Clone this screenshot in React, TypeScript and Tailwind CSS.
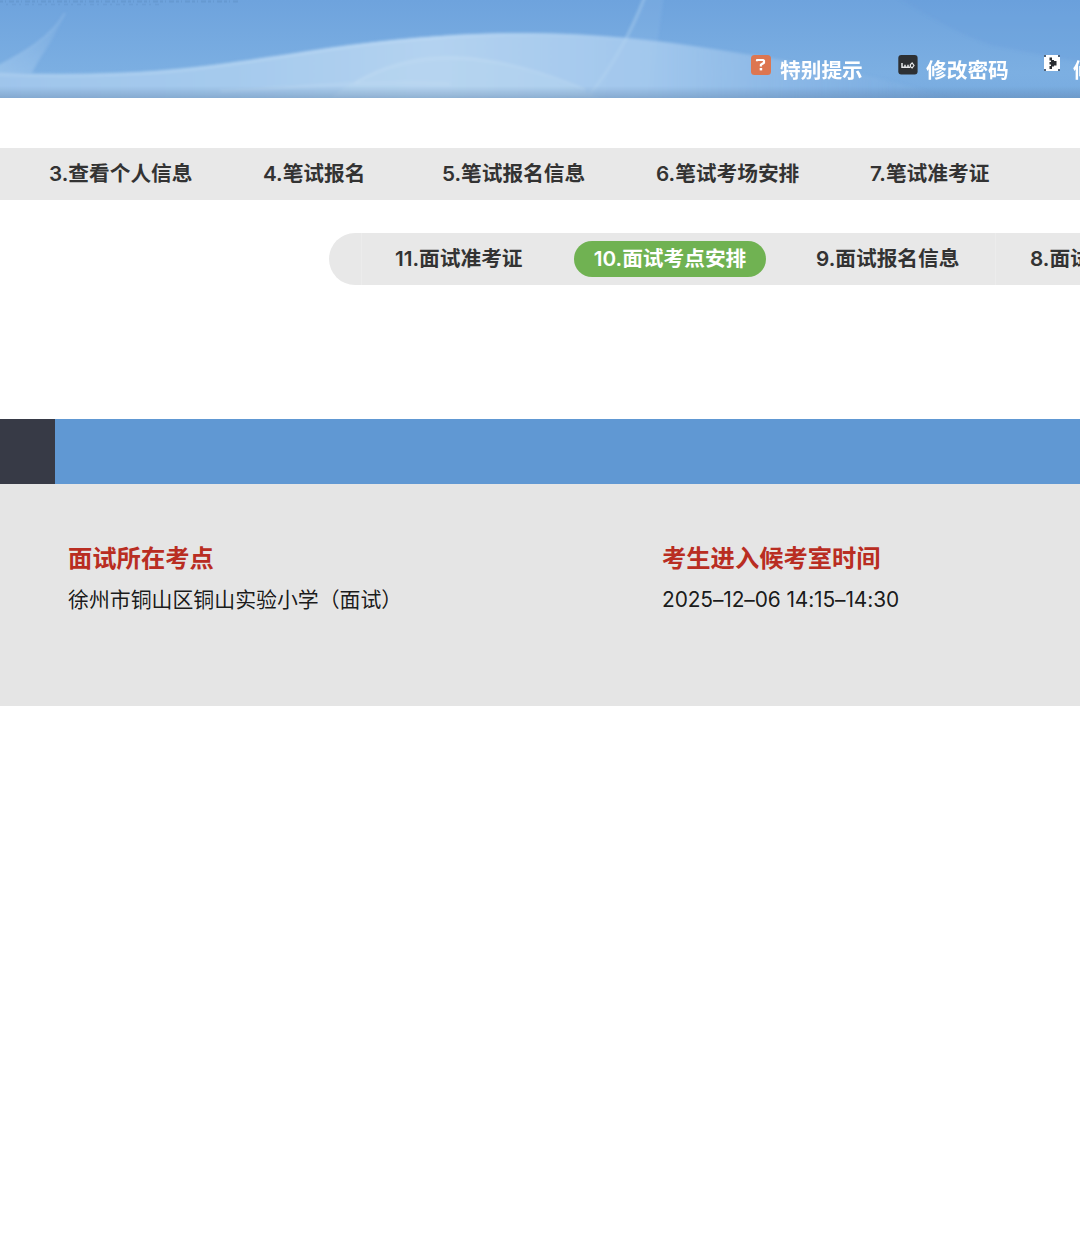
const topNav = [
  { label: "3.查看个人信息", width: "w-[214px]" },
  { label: "4.笔试报名", width: "w-[179px]" },
  { label: "5.笔试报名信息", width: "w-[214px]" },
  { label: "6.笔试考场安排", width: "w-[214px]" },
  { label: "7.笔试准考证", width: "w-[214px]" },
]

function HeaderWaves() {
  return (
    <svg className="absolute inset-0 h-full w-full" viewBox="0 0 1080 98" preserveAspectRatio="none" aria-hidden="true">
      <defs>
        <linearGradient id="sky" x1="0" y1="0" x2="0" y2="1">
          <stop offset="0" stopColor="#6ea3dd" />
          <stop offset="0.75" stopColor="#7cafe2" />
          <stop offset="1" stopColor="#78abe0" />
        </linearGradient>
        <linearGradient id="hill" x1="0" y1="0" x2="1" y2="0">
          <stop offset="0" stopColor="#9fc5eb" />
          <stop offset="0.25" stopColor="#a5caed" />
          <stop offset="0.45" stopColor="#b3d2f0" />
          <stop offset="0.68" stopColor="#a0c6ec" />
          <stop offset="0.8" stopColor="#92bce8" stopOpacity="0.8" />
          <stop offset="1" stopColor="#84b2e3" stopOpacity="0" />
        </linearGradient>
        <linearGradient id="crest" x1="0" y1="0" x2="1" y2="0">
          <stop offset="0" stopColor="#b4d4f2" stopOpacity="0.6" />
          <stop offset="0.6" stopColor="#bedaf4" />
          <stop offset="1" stopColor="#a5caee" stopOpacity="0" />
        </linearGradient>
        <linearGradient id="fan" x1="0" y1="1" x2="1" y2="0">
          <stop offset="0" stopColor="#a9cdef" />
          <stop offset="1" stopColor="#a9cdef" stopOpacity="0.1" />
        </linearGradient>
        <linearGradient id="shade" x1="0" y1="0" x2="0" y2="1">
          <stop offset="0" stopColor="#5f83ab" stopOpacity="0" />
          <stop offset="1" stopColor="#5f83ab" stopOpacity="0.42" />
        </linearGradient>
        <filter id="soft" x="-5%" y="-20%" width="110%" height="140%">
          <feGaussianBlur stdDeviation="1.4" />
        </filter>
      </defs>
      <rect width="1080" height="98" fill="url(#sky)" />
      <g filter="url(#soft)">
        <path d="M-10 70C28 51 52 36 65 13C56 37 44 50 32 73L-10 73Z" fill="url(#fan)" opacity="0.6" />
        <path d="M-10 70C28 51 52 36 65 13" fill="none" stroke="#a8ccef" strokeWidth="1.5" opacity="0.5" />
        <path d="M-10 73C150 78 200 68 330 48C480 27 590 29 720 50C820 66 900 77 970 108L-10 108Z" fill="url(#hill)" />
        <path d="M-10 74C150 79 200 69 330 49C480 28 590 30 720 51" fill="none" stroke="url(#crest)" strokeWidth="2.5" />
        <path d="M330 98C410 38 480 46 585 92L600 98Z" fill="#bed9f2" opacity="0.35" />
        <path d="M355 83C415 48 490 49 585 90" fill="none" stroke="#c4def5" strokeWidth="2" opacity="0.5" />
        <path d="M220 91C290 90 350 79 450 84" fill="none" stroke="#c8dff4" strokeWidth="3" opacity="0.3" />
        <path d="M645 -4C630 35 612 67 590 94L650 98L664 -4Z" fill="#a9ceef" opacity="0.14" />
        <path d="M645 -4C630 35 612 67 590 94" fill="none" stroke="#b6d5f2" strokeWidth="2.5" opacity="0.5" />
        <path d="M895 -4C930 17 955 32 990 45L1090 64V-4Z" fill="#659bd9" opacity="0.3" />
      </g>
      <path d="M0 1.5H240" stroke="#4f7fae" strokeWidth="2" strokeDasharray="3 2 1 3 5 2" opacity="0.25" />
      <path d="M6 4.5H160" stroke="#4f7fae" strokeWidth="1.5" strokeDasharray="2 4 4 3" opacity="0.18" />
      <rect y="86" width="1080" height="12" fill="url(#shade)" />
    </svg>
  )
}

function HelpIcon() {
  return (
    <svg className="h-5 w-5" viewBox="0 0 20 20" aria-hidden="true">
      <rect width="20" height="20" rx="3.5" fill="#dd7650" />
      <path d="M6 6.2V5H12.2L13 5.8V7.8L9.9 9.7V11.6" fill="none" stroke="#fff" strokeWidth="2.2" strokeLinejoin="round" />
      <rect x="8.7" y="13" width="2.5" height="2.4" fill="#fff" />
    </svg>
  )
}

function KeyIcon() {
  return (
    <svg className="h-5 w-5" viewBox="0 0 20 20" aria-hidden="true">
      <rect x="0.3" width="19.3" height="19.5" rx="3" fill="#2d3033" />
      <path d="M4 8V12.2H12M7 9.8V12M10 9.8V12" fill="none" stroke="#e8eaec" strokeWidth="1.5" />
      <path d="M12.4 9.6L14.1 8L16 10.5L14.1 13L12.4 11.6Z" fill="none" stroke="#e8eaec" strokeWidth="1.2" />
    </svg>
  )
}

function ExitIcon() {
  return (
    <svg className="h-4 w-4" viewBox="0 0 16 16" aria-hidden="true">
      <rect width="16" height="16" fill="#fff" />
      <path d="M0 0H2V2H0ZM14 0H16V2H14ZM0 14H2V16H0ZM14 14H16V16H14Z" fill="#4f6277" />
      <path d="M5.5 2.5H8V5H10V6H12.5V10.5H10V11.5H8V14H5.5V11H7V9.5H5.5V7H7V5.5H5.5Z" fill="#292d31" />
    </svg>
  )
}

export default function App() {
  return (
    <div className="h-[1244px] w-[1080px] overflow-hidden bg-white font-['Inter','Noto_Sans_CJK_SC',sans-serif] text-[20.7px] text-[#333]">
      <header className="relative h-[98px] overflow-hidden">
        <HeaderWaves />
        <nav className="relative flex h-full items-start whitespace-nowrap pl-[751px] pt-[55px] font-semibold text-white">
          <a className="flex w-[147px] shrink-0 items-start gap-[9px]">
            <HelpIcon />
            <span className="leading-8">特别提示</span>
          </a>
          <a className="flex w-[146px] shrink-0 items-start gap-2">
            <KeyIcon />
            <span className="leading-8">修改密码</span>
          </a>
          <a className="flex shrink-0 items-start gap-[13px]">
            <ExitIcon />
            <span className="leading-8">修改信息</span>
          </a>
        </nav>
      </header>

      <nav className="mt-[50px] flex h-[52px] items-center overflow-hidden whitespace-nowrap bg-[#e8e8e8] pl-[49px] font-semibold">
        {topNav.map((item) => (
          <a key={item.label} className={`${item.width} shrink-0`}>{item.label}</a>
        ))}
      </nav>

      <nav className="ml-[329px] mt-[33px] flex h-[52px] items-center overflow-hidden whitespace-nowrap rounded-l-full bg-[#e8e8e8] font-semibold">
        <span className="h-full w-[33px] shrink-0 border-r border-[#ececec]" />
        <a className="w-[212px] shrink-0 pl-[33px]">11.面试准考证</a>
        <a className="flex h-9 w-48 shrink-0 items-center justify-center rounded-full bg-[#70b252] text-white">10.面试考点安排</a>
        <a className="flex h-full w-[230px] shrink-0 items-center border-r border-[#ececec] pl-[50px]">9.面试报名信息</a>
        <a className="shrink-0 pl-[34px]">8.面试报名</a>
      </nav>

      <div className="mt-[134px] flex h-[65px]">
        <div className="w-[55px] bg-[#373a46]" />
        <div className="flex-1 bg-[#6098d3]" />
      </div>

      <section className="flex h-[222px] bg-[#e5e5e5] pl-[68px] pt-[56px] text-[20.9px] text-black/90">
        <div className="w-[594px] shrink-0">
          <h3 className="text-[24.3px] font-bold leading-9 text-[#b92d22]">面试所在考点</h3>
          <p className="mt-[7px] leading-[34px]">徐州市铜山区铜山实验小学（面试）</p>
        </div>
        <div>
          <h3 className="text-[24.3px] font-bold leading-9 text-[#b92d22]">考生进入候考室时间</h3>
          <p className="mt-[7px] leading-[34px] tracking-[-0.1px]">2025–12–06 14:15–14:30</p>
        </div>
      </section>
    </div>
  )
}
